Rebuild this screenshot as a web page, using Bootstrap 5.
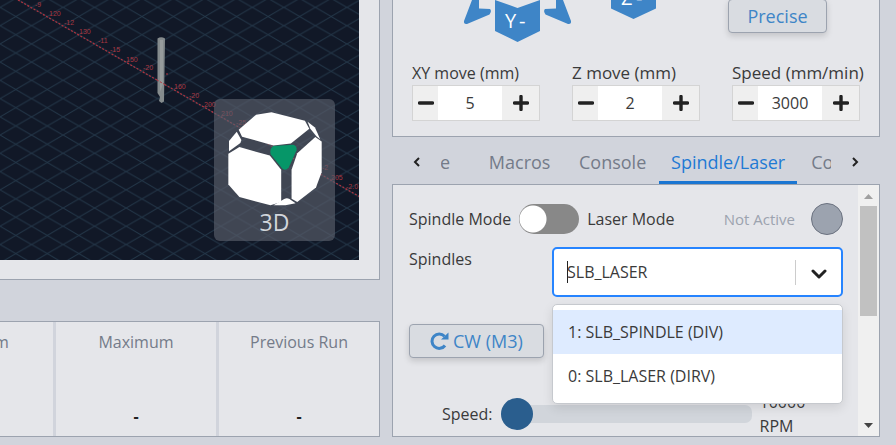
<!DOCTYPE html>
<html lang="en">
<head>
<meta charset="utf-8">
<meta name="viewport" content="width=device-width, initial-scale=1">
<title>CNC Control</title>
<link href="https://cdn.jsdelivr.net/npm/bootstrap@5.3.0/dist/css/bootstrap.min.css" rel="stylesheet">
<style>
  body { font-family: "Open Sans", "Noto Sans", sans-serif; font-size: 16px; line-height: 24px; color: #3a3a3a; background: #d1d4dc; }
  .workspace { display: grid; grid-template-columns: 380fr 488fr; column-gap: 12px; padding: 0 16px 8px 0; }
  .panel { background: #e5e6ea; border: 1px solid #9ca3af; }
  .left-col { gap: 41px; }
  .viewer { border-width: 0 1px 1px 0; padding: 0 20px 19px 0; }
  .scene { background: #111827; }
  .view-cube { right: 24px; bottom: 19px; width: 121px; height: 142px; border: 0; border-radius: 6px; background: rgba(90, 96, 108, .65); color: #d1d5db; font-size: 23px; line-height: 28px; padding-top: 12px; }
  .stats { height: 116px; border-left: 0; }
  .stat { flex: 0 0 163px; border-right: 3px solid #d1d4dc; color: #747b89; padding: 8px 0; }
  .stat:last-child { flex-basis: 160px; border-right: 0; }
  .stat dd { color: #222; }
  .jog { border-top: 0; padding: 0 18px 15px 19px; }
  .jog-top { margin-bottom: 18px; }
  .soft-btn { height: 34px; padding: 0 20px; border: 1px solid #9ca3af; border-radius: 4px; background: #d9dce1; color: #3e85c7; font-size: 18px; line-height: 32px; box-shadow: 0 3px 6px rgba(0, 0, 0, .15); }
  .precise { width: 99px; margin-top: -1px; padding: 0; }
  .fields { gap: 32px; }
  .field { width: 128px; }
  .wide-label { font-size: 17px; }
  .stepper { height: 36px; border: 1px solid #d4d4d4; background: #efefef; }
  .stepper button { border: 0; background: #efefef; padding: 0; }
  .stepper .dec { width: 25px; }
  .stepper .inc { width: 37px; }
  .stepper input { width: 64px; border: 0; background: #fff; color: #3a3a3a; text-align: center; padding: 0; }
  .tabbar { height: 47px; padding: 0 10px; }
  .scroll-btn { flex: 0 0 30px; border: 0; background: none; padding: 0; }
  .tabs { margin: 0 9px; min-width: 0; }
  .tab { flex: none; min-width: 93px; border: 0; border-bottom: 3px solid transparent; background: none; color: #747b89; font-size: 18px; padding: 6px 10px 0; }
  .tab:first-child { min-width: 0; margin-left: -51px; margin-right: 13px; }
  .tab.active { min-width: 138px; color: #1f7ad4; border-color: #1a76d2; }
  .settings { min-height: 0; }
  .spindle-body { padding: 18px 15px 0 16px; min-width: 0; }
  .mode-switch { appearance: none; width: 60px; height: 30px; margin: 0 8px; border-radius: 15px; background: radial-gradient(circle at 14px 15px, #fff 13px, transparent 14px) #888; }
  .inactive { color: #9ca3af; font-size: 15px; margin-right: 16px; }
  .lamp { width: 32px; height: 32px; background: #9ca3af; border: 1px solid #6b7280; }
  .picker-row { margin-top: 12px; }
  .picker { width: 291px; }
  .picker-box { height: 50px; border: 2px solid #2684ff; border-radius: 5px; background: #fff; padding-left: 13px; }
  .caret { width: 1px; height: 22px; margin-right: -1px; background: #222; }
  .picker-box input { border: 0; background: none; color: #3a3a3a; padding: 0; outline: 0; min-width: 0; }
  .divider { width: 1px; height: 25px; background: #ccc; }
  .picker-box button { width: 45px; border: 0; background: none; padding: 0; }
  .options { top: 57px; padding: 5px 0; background: #fff; border: 1px solid #c6c9ce; border-radius: 5px; box-shadow: 0 4px 11px rgba(0, 0, 0, .1); z-index: 2; }
  .options li { height: 44px; line-height: 44px; padding: 0 15px; }
  .options li[aria-selected="true"] { background: #deebff; }
  .run-row { margin-top: 27px; }
  .speed-row { margin-top: 32px; padding-left: 33px; }
  .speed { appearance: none; height: 32px; width: 251px; margin: 0 8px; background: none; }
  .speed::-webkit-slider-runnable-track { height: 18px; border-radius: 7px; background: #d1d5db; }
  .speed::-webkit-slider-thumb { appearance: none; width: 32px; height: 32px; margin-top: -7px; border-radius: 50%; background: #2a5e8e; }
  .rail { width: 21px; background: #f0f0f0; padding: 9px 0 8px; }
  .rail-thumb { width: 17px; height: 110px; margin-top: 7px; background: #c1c1c1; }
</style>
<script src="https://cdn.jsdelivr.net/npm/bootstrap@5.3.0/dist/js/bootstrap.bundle.min.js"></script>
</head>
<body>
<main class="workspace vh-100 overflow-hidden">

  <div class="left-col d-flex flex-column overflow-hidden">
    <section class="panel viewer flex-grow-1 d-flex">
      <div class="scene position-relative flex-grow-1 overflow-hidden">
        <svg class="position-absolute w-100 h-100" aria-hidden="true">
          <defs>
            <pattern id="grid" width="31.54" height="18.24" patternUnits="userSpaceOnUse" x="0" y="7.4">
              <path d="M0 0L31.54 18.24M31.54 0L0 18.24" stroke="#24384a" stroke-width="1" fill="none"/>
            </pattern>
          </defs>
          <rect width="100%" height="100%" fill="url(#grid)"/>
          <path d="M18 0L420 231.500" stroke="#b3323d" stroke-width="1.200" stroke-dasharray="2 1.600"/>
          <g fill="#a83640" font-family="Liberation Sans, sans-serif" font-size="7">
            <text x="35" y="7">-9</text><text x="49" y="16">120</text><text x="64" y="25">-12</text><text x="79" y="34">130</text>
            <text x="98" y="43">-11</text><text x="110" y="52">-15</text><text x="126" y="62">150</text><text x="143" y="70">-20</text>
            <text x="174" y="89">160</text><text x="189" y="98">-20</text><text x="204" y="107">200</text><text x="221" y="116">210</text>
            <text x="236" y="125">-25</text><text x="322" y="170">-2</text><text x="331" y="180">205</text><text x="346" y="189">-2.0</text>
          </g>
          <path d="M157.500 38.500Q161 36 165 38.500L164 101.500L161.500 103L159 101L160 97L157.500 93Z" fill="#858b8d"/>
          <path d="M160 40L163 40L163 84L160 92Z" fill="#969b9c"/>
          <path d="M157 80L165 84.600M166 74h3" stroke="#b3323d" stroke-dasharray="2 1.500"/>
        </svg>
        <button type="button" class="view-cube position-absolute d-flex flex-column align-items-center">
          <svg width="97" height="97" viewBox="80 62 290 290" aria-hidden="true">
            <g fill="#fff">
              <path d="M118 118L170 73L216 66L316 91L329 115L274 159L222 165L128 139Z"/>
              <path d="M112 124L89 152V182L123 158L126 149Z"/>
              <path d="M120 170L211 195L245 238V334L213 344L120 319L87 282V190Z"/>
              <path d="M276 238L293 188L347 140L366 153V245L349 291L293 334L276 324Z"/>
              <path d="M324 94L346 111L362 147L351 138L332 115Z"/>
              <path d="M222 344L254 325Q262 321 270 325L288 338L258 344Z"/>
            </g>
            <path d="M222 167L281 163Q293 167 291 179L268 230Q258 243 248 234L214 192Q209 174 222 167Z" fill="#069668"/>
          </svg>
          <span>3D</span>
        </button>
      </div>
    </section>

    <dl class="panel stats d-flex justify-content-end overflow-hidden m-0 text-center">
      <div class="stat d-flex flex-column justify-content-between"><dt class="fw-normal">Minimum</dt><dd class="fw-bold m-0">-</dd></div>
      <div class="stat d-flex flex-column justify-content-between"><dt class="fw-normal">Maximum</dt><dd class="fw-bold m-0">-</dd></div>
      <div class="stat d-flex flex-column justify-content-between"><dt class="fw-normal">Previous Run</dt><dd class="fw-bold m-0">-</dd></div>
    </dl>
  </div>

  <div class="d-flex flex-column overflow-hidden">
    <section class="panel jog">
      <div class="jog-top d-flex align-items-start">
        <svg width="316" height="43" viewBox="412 0 316 43" role="img" aria-label="Jog controls">
          <g fill="#3e85c7">
            <path d="M472 0L464 21Q463.500 24.500 467 24L489.500 14.500Q492 11 490 9L479 8.600V0Z"/>
            <path d="M563 0L571 21Q571.500 24.500 568 24L545.500 14.500Q543 11 545 9L556 8.600V0Z"/>
            <path d="M495 0L517.500 8L540 0V31L517.500 42L495 31Z"/>
            <path d="M611 0H656V8.500L633.500 19L611 8.500Z"/>
          </g>
          <g fill="#fff" font-size="20"><text x="505" y="28">Y</text><text x="519" y="28">-</text><text x="621" y="5">Z</text><text x="636" y="5">-</text></g>
        </svg>
        <button type="button" class="soft-btn precise">Precise</button>
      </div>
      <div class="fields d-flex text-nowrap">
        <div class="field">
          <label for="xy" class="d-block">XY move (mm)</label>
          <div class="stepper d-flex">
            <button type="button" class="dec" aria-label="Decrease XY move"><svg width="16" height="16" class="d-block mx-auto"><path d="M1.500 8h13" stroke="#222" stroke-width="3.400" stroke-linecap="round"/></svg></button>
            <input id="xy" type="text" value="5">
            <button type="button" class="inc" aria-label="Increase XY move"><svg width="16" height="16" class="d-block mx-auto"><path d="M1.500 8h13M8 1.500v13" stroke="#222" stroke-width="3.400" stroke-linecap="round"/></svg></button>
          </div>
        </div>
        <div class="field">
          <label for="z" class="wide-label d-block">Z move (mm)</label>
          <div class="stepper d-flex">
            <button type="button" class="dec" aria-label="Decrease Z move"><svg width="16" height="16" class="d-block mx-auto"><path d="M1.500 8h13" stroke="#222" stroke-width="3.400" stroke-linecap="round"/></svg></button>
            <input id="z" type="text" value="2">
            <button type="button" class="inc" aria-label="Increase Z move"><svg width="16" height="16" class="d-block mx-auto"><path d="M1.500 8h13M8 1.500v13" stroke="#222" stroke-width="3.400" stroke-linecap="round"/></svg></button>
          </div>
        </div>
        <div class="field">
          <label for="feed" class="wide-label d-block">Speed (mm/min)</label>
          <div class="stepper d-flex">
            <button type="button" class="dec" aria-label="Decrease speed"><svg width="16" height="16" class="d-block mx-auto"><path d="M1.500 8h13" stroke="#222" stroke-width="3.400" stroke-linecap="round"/></svg></button>
            <input id="feed" type="text" value="3000">
            <button type="button" class="inc" aria-label="Increase speed"><svg width="16" height="16" class="d-block mx-auto"><path d="M1.500 8h13M8 1.500v13" stroke="#222" stroke-width="3.400" stroke-linecap="round"/></svg></button>
          </div>
        </div>
      </div>
    </section>

    <div class="tabbar d-flex flex-shrink-0">
      <button type="button" class="scroll-btn" aria-label="Previous tabs"><svg width="8" height="12"><path d="M6 2L2 6L6 10" fill="none" stroke="#222" stroke-width="2"/></svg></button>
      <div class="tabs d-flex flex-grow-1 overflow-hidden" role="tablist">
        <button type="button" role="tab" class="tab">Probe</button>
        <button type="button" role="tab" class="tab">Macros</button>
        <button type="button" role="tab" class="tab">Console</button>
        <button type="button" role="tab" class="tab active" aria-selected="true">Spindle/Laser</button>
        <button type="button" role="tab" class="tab">Coolant</button>
      </div>
      <button type="button" class="scroll-btn" aria-label="Next tabs"><svg width="8" height="12"><path d="M2 2L6 6L2 10" fill="none" stroke="#222" stroke-width="2"/></svg></button>
    </div>

    <section class="panel settings d-flex flex-grow-1 overflow-hidden">
      <div class="spindle-body flex-grow-1">
        <div class="d-flex align-items-center">
          <label for="mode">Spindle Mode</label>
          <input id="mode" type="checkbox" role="switch" class="mode-switch">
          <label for="mode">Laser Mode</label>
          <span class="inactive ms-auto">Not Active</span>
          <span class="lamp rounded-circle"></span>
        </div>
        <div class="picker-row d-flex justify-content-between align-items-start">
          <label for="spindle">Spindles</label>
          <div class="picker position-relative">
            <div class="picker-box d-flex align-items-center">
              <span class="caret"></span>
              <input id="spindle" type="text" role="combobox" aria-expanded="true" aria-controls="spindle-list" class="flex-grow-1" value="SLB_LASER">
              <span class="divider"></span>
              <button type="button" aria-label="Toggle list"><svg width="16" height="12"><path d="M2 3L8 9L14 3" fill="none" stroke="#222" stroke-width="3" stroke-linecap="round" stroke-linejoin="round"/></svg></button>
            </div>
            <ul id="spindle-list" role="listbox" class="options position-absolute w-100 list-unstyled m-0">
              <li role="option" aria-selected="true">1: SLB_SPINDLE (DIV)</li>
              <li role="option" aria-selected="false">0: SLB_LASER (DIRV)</li>
            </ul>
          </div>
        </div>
        <div class="run-row">
          <button type="button" class="soft-btn d-flex align-items-center"><svg width="19" height="18" viewBox="0 0 19 18" class="me-1" aria-hidden="true"><path d="M14.500 4.300A7.200 7.200 0 1 0 15 13.500" fill="none" stroke="#3e85c7" stroke-width="3"/><path d="M18.500 0.500V7.500H11Z" fill="#3e85c7"/></svg>CW (M3)</button>
        </div>
        <div class="speed-row d-flex align-items-center">
          <label for="rpm">Speed:</label>
          <input id="rpm" type="range" class="speed" min="0" max="100" value="0">
          <output for="rpm">10000<br>RPM</output>
        </div>
      </div>
      <div class="rail d-flex flex-column align-items-center flex-shrink-0" aria-hidden="true">
        <svg width="9" height="5"><path d="M0 5L4.500 0L9 5Z" fill="#a0a0a0"/></svg>
        <div class="rail-thumb"></div>
        <svg width="9" height="5" class="mt-auto"><path d="M0 0L4.500 5L9 0Z" fill="#444"/></svg>
      </div>
    </section>
  </div>
</main>
</body>
</html>
